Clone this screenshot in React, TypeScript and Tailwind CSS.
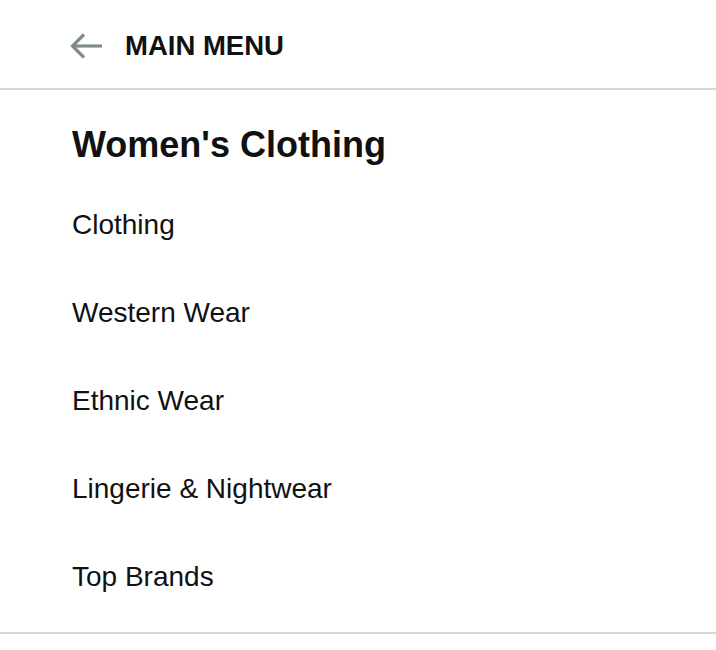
const items = ["Clothing", "Western Wear", "Ethnic Wear", "Lingerie & Nightwear", "Top Brands"];

export default function App() {
  return (
    <div className="w-[716px] h-[650px] bg-white font-['Liberation_Sans',Arial,sans-serif] text-[#111]">
      <div className="flex h-[90px] items-center gap-[22px] border-b-2 border-[#d6d6d6] pl-[70px] pt-[4px]">
        <svg width="33" height="30" viewBox="0 0 33 30" fill="none" stroke="#7f8b8c" strokeWidth="3.2">
          <path d="M3 15H32" />
          <path d="M14 3.5L2.5 15L14 26.5" />
        </svg>
        <span className="text-[27.5px] font-bold leading-none">MAIN MENU</span>
      </div>
      <div className="border-b-2 border-[#d6d6d6] pl-[72px] pb-[12px]">
        <h1 className="pt-[33px] pb-[13px] text-[36px] font-bold leading-[44px]">Women's Clothing</h1>
        <ul>
          {items.map((item) => (
            <li key={item} className="flex h-[88px] items-center pt-[2px] text-[28px] leading-none">
              {item}
            </li>
          ))}
        </ul>
      </div>
    </div>
  );
}
